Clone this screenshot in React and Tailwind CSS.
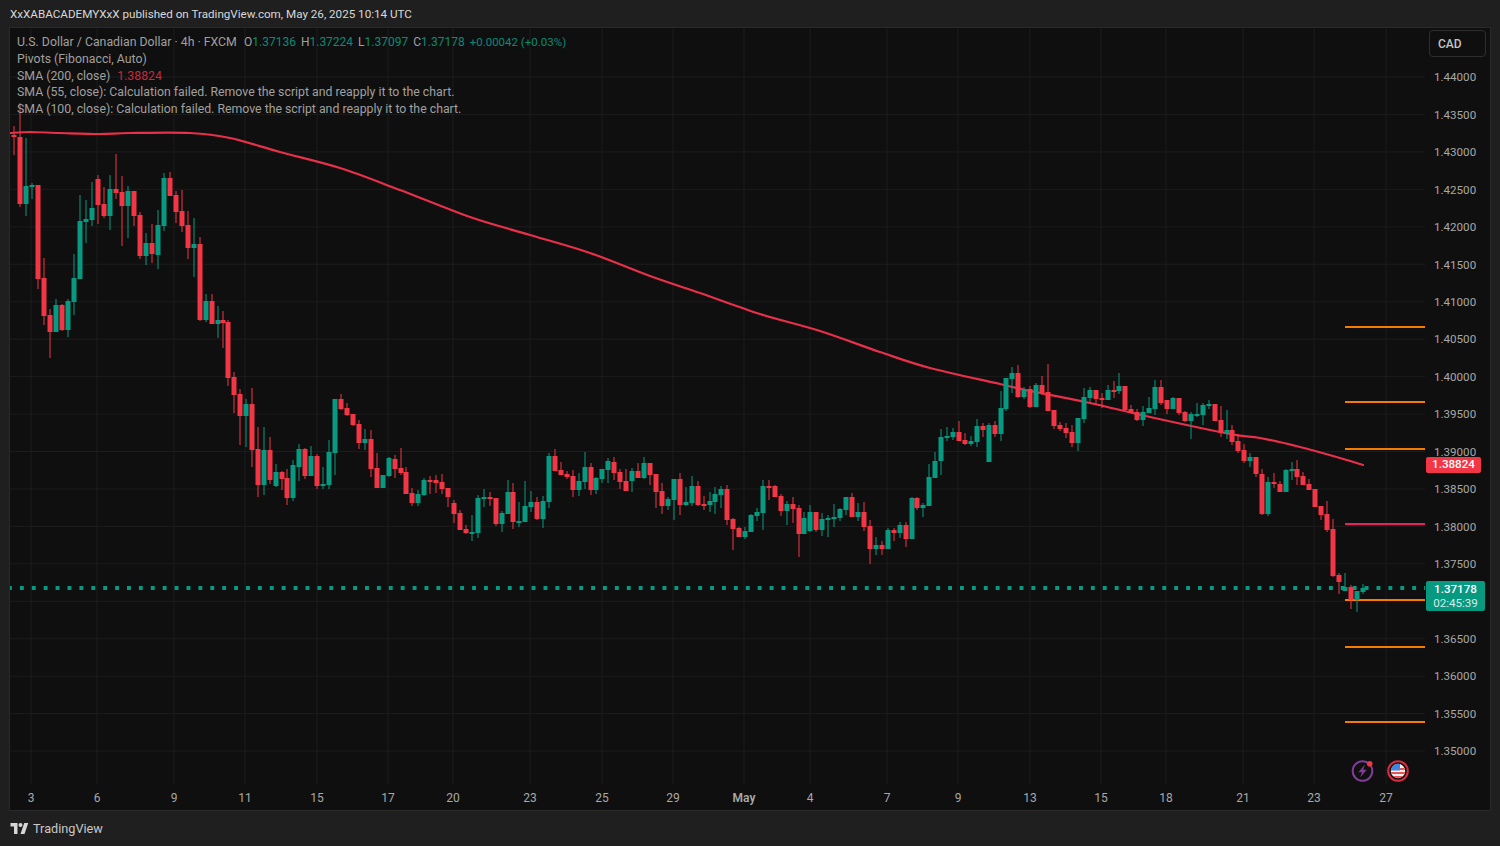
import React from 'react';

const UP = '#089981';
const DOWN = '#f23645';

// x, body top, body bottom, wick top, wick bottom, 1 = up candle
const candles = [
  [14,135,137,126,155,0],[20,137,204,103,207,0],[26,186,204,138,216,1],[32,185,187,183,199,1],[38,185,279,185,289,0],[44,278,316,258,325,0],
  [50,315,332,309,358,0],[56,305,332,299,332,1],[62,305,330,304,331,0],[68,301,330,299,337,1],[74,278,302,254,315,1],[80,221,279,195,279,1],
  [86,219,222,200,243,1],[92,208,220,182,226,1],[98,179,205,175,224,0],[104,204,216,187,218,0],[110,189,216,175,230,1],[116,189,193,154,199,0],
  [122,192,206,176,246,0],[128,191,206,186,238,1],[134,191,216,191,226,0],[140,215,256,212,259,0],[146,243,256,233,265,1],[152,243,254,224,263,0],
  [158,225,255,210,269,1],[164,178,226,173,231,1],[170,178,196,172,196,0],[176,195,212,191,223,0],[182,211,226,190,232,0],[188,225,248,211,259,0],
  [194,244,248,218,277,1],[200,244,320,237,321,0],[206,301,320,294,322,1],[212,301,324,294,324,0],[218,320,324,306,338,1],[223,320,323,311,348,0],
  [228,322,378,320,386,0],[234,377,395,372,413,0],[240,394,416,389,445,0],[246,404,416,399,447,1],[252,404,450,388,467,0],[258,449,485,427,497,0],
  [264,450,485,427,495,1],[270,450,480,437,484,0],[276,472,486,464,487,1],[282,472,479,471,490,0],[287,478,498,469,505,0],[293,465,498,460,501,1],
  [299,449,467,444,481,1],[305,449,476,448,479,0],[311,456,476,446,476,1],[317,456,486,454,489,0],[323,484,486,467,489,1],[329,452,485,440,489,1],
  [335,399,453,399,475,1],[341,399,409,394,410,0],[347,408,415,403,416,0],[353,414,425,414,426,0],[359,424,443,420,449,0],[365,439,443,429,450,1],
  [371,439,469,430,477,0],[377,468,488,453,488,0],[383,475,488,475,488,1],[389,458,476,457,477,1],[395,459,469,455,478,0],[401,468,473,448,475,0],
  [406,472,494,467,494,0],[412,493,503,488,506,0],[418,494,503,490,506,1],[424,480,495,478,496,1],[430,480,482,476,494,0],[436,480,483,475,493,0],
  [442,482,489,474,494,0],[448,488,497,488,507,0],[454,503,514,500,523,0],[460,513,530,510,530,0],[466,529,533,525,534,0],[472,532,534,515,541,1],
  [478,498,533,495,538,1],[484,497,499,489,507,1],[490,497,499,492,506,0],[496,498,524,498,526,0],[502,513,524,511,532,1],[508,492,514,480,514,1],
  [513,492,522,483,529,0],[519,521,523,502,527,1],[525,506,522,481,522,1],[531,502,507,491,512,1],[537,502,519,497,520,0],[543,501,519,496,528,1],
  [549,456,502,453,508,1],[555,456,471,449,471,0],[561,470,475,462,475,0],[567,474,477,471,479,0],[573,476,490,470,497,0],[579,481,490,473,496,1],
  [585,467,482,452,489,1],[591,467,490,463,495,0],[596,478,490,477,494,1],[602,469,479,469,483,1],[608,461,470,458,483,1],[614,462,473,457,480,0],
  [620,472,482,469,489,0],[626,481,491,469,491,0],[632,471,481,468,492,1],[638,471,478,463,478,0],[644,463,478,457,479,1],[650,463,475,463,485,0],
  [656,474,492,474,508,0],[662,491,506,483,514,0],[668,499,506,497,510,1],[674,479,500,479,520,1],[680,479,505,473,515,0],[686,502,505,487,506,1],
  [692,486,503,476,506,1],[698,486,505,481,506,0],[704,504,506,496,510,0],[710,501,505,492,512,1],[715,494,502,487,514,1],[721,489,495,486,508,1],
  [727,489,520,485,525,0],[733,519,529,518,550,0],[739,528,537,527,537,0],[745,531,537,527,539,1],[751,515,532,514,532,1],[757,512,516,508,521,1],
  [763,486,513,480,530,1],[769,486,488,480,500,0],[775,486,497,485,497,0],[781,496,511,494,516,0],[787,504,511,501,525,1],[793,504,509,497,523,0],
  [799,508,534,505,557,0],[804,518,534,512,534,1],[810,512,531,505,532,1],[816,512,530,512,532,0],[822,519,530,513,536,1],[828,518,520,515,537,1],
  [834,517,519,504,527,1],[840,509,518,508,521,1],[846,497,510,497,515,1],[852,497,517,493,517,0],[858,512,517,503,521,1],[864,512,527,502,531,0],
  [870,526,549,520,564,0],[876,545,549,537,555,1],[882,545,549,541,555,0],[888,530,549,528,549,1],[894,530,533,528,541,0],[900,525,533,522,538,1],
  [906,525,539,522,547,0],[912,498,539,497,539,1],[917,498,508,497,510,0],[923,505,508,503,517,1],[929,477,506,464,506,1],[935,461,478,452,478,1],
  [941,437,461,429,475,1],[947,436,438,427,441,1],[953,432,437,428,440,1],[959,432,441,421,441,0],[965,440,444,433,445,0],[971,441,444,436,446,1],
  [977,426,442,419,447,1],[983,426,430,423,437,0],[989,425,462,423,462,1],[995,425,434,421,437,0],[1001,408,434,391,441,1],[1006,378,409,378,411,1],
  [1012,373,379,367,393,1],[1018,373,397,365,398,0],[1024,390,397,387,399,1],[1030,389,407,386,408,0],[1036,385,407,383,407,1],[1042,385,393,376,395,0],
  [1048,392,411,364,411,0],[1054,410,426,410,429,0],[1060,425,429,422,431,0],[1066,428,433,423,438,0],[1072,432,443,425,447,0],[1078,418,443,418,451,1],
  [1084,397,419,388,423,1],[1090,390,398,387,402,1],[1096,390,399,390,405,0],[1102,398,400,393,408,0],[1108,390,400,385,400,1],[1114,390,392,381,398,0],
  [1119,386,391,373,394,1],[1125,386,410,386,410,0],[1131,409,413,405,413,0],[1137,412,420,409,421,0],[1143,412,420,406,426,1],[1149,408,413,397,413,1],
  [1155,387,409,380,415,1],[1161,387,403,380,405,0],[1167,400,409,400,414,0],[1173,398,409,397,409,1],[1179,398,413,398,415,0],[1185,412,421,411,422,0],
  [1191,414,421,412,439,1],[1197,414,416,403,417,1],[1203,405,415,403,425,1],[1209,404,406,400,409,1],[1215,404,421,404,421,0],[1221,420,433,406,437,0],
  [1227,430,433,410,439,1],[1232,430,442,425,445,0],[1238,441,451,434,453,0],[1244,450,461,444,463,0],[1250,457,461,453,467,1],[1256,457,474,457,477,0],
  [1262,474,514,469,515,0],[1268,482,514,477,516,1],[1274,482,484,473,488,0],[1280,484,492,481,492,0],[1286,470,492,469,492,1],[1292,469,471,462,480,1],
  [1297,469,477,460,485,0],[1303,476,485,472,485,0],[1309,484,490,479,490,0],[1315,489,507,489,507,0],[1321,506,515,506,520,0],[1327,514,530,501,532,0],
  [1333,529,576,519,577,0],[1339,575,582,573,594,0],[1345,587,591,573,591,1],[1351,587,600,585,609,0],[1357,591,600,591,612,1],[1363,588,592,584,594,1],
];

const smaPoints = [[10,133],[30,132],[60,133],[100,134],[130,133],[190,133],[230,138],[280,152],[340,168],[400,190],[470,217],[530,235],[590,253],[650,276],[700,293],[760,314],[820,331],[880,352],[930,368],[1000,384],[1030,391],[1090,403],[1150,417],[1230,434],[1260,438],[1300,447],[1340,458],[1363,465]];

// smooth the moving average through its points
const smaPath = () => {
  let d = `M${smaPoints[0][0]} ${smaPoints[0][1]}`;
  for (let i = 0; i < smaPoints.length - 1; i++) {
    const p0 = smaPoints[Math.max(i - 1, 0)];
    const p1 = smaPoints[i];
    const p2 = smaPoints[i + 1];
    const p3 = smaPoints[Math.min(i + 2, smaPoints.length - 1)];
    const c1 = [p1[0] + (p2[0] - p0[0]) / 6, p1[1] + (p2[1] - p0[1]) / 6];
    const c2 = [p2[0] - (p3[0] - p1[0]) / 6, p2[1] - (p3[1] - p1[1]) / 6];
    d += ` C${c1[0]} ${c1[1]} ${c2[0]} ${c2[1]} ${p2[0]} ${p2[1]}`;
  }
  return d;
};

const prices = ['1.44000','1.43500','1.43000','1.42500','1.42000','1.41500','1.41000','1.40500','1.40000','1.39500','1.39000','1.38500','1.38000','1.37500','1.37000','1.36500','1.36000','1.35500','1.35000'];

const timeLabels = [
  [31,'3'],[97,'6'],[174,'9'],[245,'11'],[317,'15'],[388,'17'],[453,'20'],[530,'23'],[602,'25'],[673,'29'],[744,'May'],
  [810,'4'],[887,'7'],[958,'9'],[1030,'13'],[1101,'15'],[1166,'18'],[1243,'21'],[1314,'23'],[1386,'27'],
];

const pivots = [[327,'#f57c00'],[402,'#f57c00'],[449,'#f57c00'],[524,'#e91e63'],[600,'#f57c00'],[647,'#f57c00'],[722,'#f57c00']];

const ChartCanvas = () => (
  <svg className="absolute inset-0 w-full h-full" viewBox="10 28 1415 756">
    {prices.map((p, i) => (
      <line key={p} x1="10" x2="1425" y1={77 + i * 37.45} y2={77 + i * 37.45} stroke="#1c1c1c" strokeWidth="1" />
    ))}
    {timeLabels.map(([x]) => (
      <line key={x} x1={x} x2={x} y1="28" y2="784" stroke="#1c1c1c" strokeWidth="1" />
    ))}
    <line x1="8" x2="1425" y1="588" y2="588" stroke={UP} strokeWidth="4" strokeDasharray="3.9 8" />
    {pivots.map(([y, color]) => (
      <line key={y} x1="1345" x2="1425" y1={y} y2={y} stroke={color} strokeWidth="2" />
    ))}
    <path d={smaPath()} fill="none" stroke="#e9304a" strokeWidth="2.2" strokeLinecap="round" />
    {candles.map(([x, top, bot, wTop, wBot, up]) => (
      <g key={x} fill={up ? UP : DOWN}>
        <rect x={x - 0.5} y={wTop} width="1" height={wBot - wTop} />
        <rect x={x - 2.5} y={top} width="5" height={bot - top} />
      </g>
    ))}
    {/* lightning event marker */}
    <circle cx="1362.5" cy="771" r="9.8" fill="#0f0f0f" stroke="#7d3c98" strokeWidth="2" />
    <path d="M1365 764.5 L1358.3 772.3 H1362 L1360.2 777.5 L1366.8 769.8 H1363.2 Z" fill="#7d3c98" />
    <circle cx="1369.7" cy="763.8" r="2.8" fill="#f23645" />
    {/* US flag marker */}
    <circle cx="1398" cy="771" r="9.8" fill="#0f0f0f" stroke="#d92b3f" strokeWidth="2" />
    <clipPath id="flag"><circle cx="1398" cy="771" r="7.2" /></clipPath>
    <g clipPath="url(#flag)">
      <rect x="1390" y="763" width="16" height="16" fill="#f1f1f1" />
      <rect x="1390" y="768" width="16" height="2" fill="#ef5350" />
      <rect x="1390" y="772" width="16" height="2" fill="#ef5350" />
      <rect x="1390" y="776" width="16" height="3" fill="#ef5350" />
      <rect x="1390" y="763" width="10" height="7.5" fill="#3f86e0" />
    </g>
  </svg>
);

const Logo = () => (
  <svg viewBox="0 0 36 22" className="w-[19px] h-[11px]" fill="#d6d6d6">
    <path d="M14 22H7V7H0V0h14v22zM28 22h-8l7.5-22h8L28 22z" />
    <circle cx="20" cy="4" r="4" />
  </svg>
);

const App = () => {
  return (
    <div className="w-[1500px] h-[846px] bg-[#1f1f1f] flex flex-col overflow-hidden font-['Roboto',sans-serif]">
      <div className="h-[27px] pt-[2px] px-[10px] flex items-center text-[11.65px] text-[#d8d8d8]">
        XxXABACADEMYXxX published on TradingView.com, May 26, 2025 10:14 UTC
      </div>

      <div className="w-[1482px] h-[784px] ml-[9px] bg-[#0f0f0f] border border-[#2a2a2a] flex flex-col">
        <div className="flex h-[756px]">
          <div className="relative w-[1415px]">
            <ChartCanvas />
            <div className="absolute left-[7px] top-[6px] text-[12.3px] leading-[16.8px] text-[#a0a0a0]">
              <div className="flex items-baseline">
                <span className="w-[227px]">U.S. Dollar / Canadian Dollar · 4h · FXCM</span>
                <div className="flex gap-[5px] text-[12px]">
                  <span>O<span className="text-[#0b8a75]">1.37136</span></span>
                  <span>H<span className="text-[#0b8a75]">1.37224</span></span>
                  <span>L<span className="text-[#0b8a75]">1.37097</span></span>
                  <span>C<span className="text-[#0b8a75]">1.37178</span></span>
                  <span className="text-[11.5px] text-[#0b8a75]">+0.00042 (+0.03%)</span>
                </div>
              </div>
              <div>Pivots (Fibonacci, Auto)</div>
              <div className="flex gap-[7px]">
                <span>SMA (200, close)</span>
                <span className="text-[#c9283c]">1.38824</span>
              </div>
              <div>SMA (55, close): Calculation failed. Remove the script and reapply it to the chart.</div>
              <div>SMA (100, close): Calculation failed. Remove the script and reapply it to the chart.</div>
            </div>
          </div>

          <div className="relative flex-1 flex flex-col">
            <div className="ml-[4px] mt-[2px] w-[57px] h-[27px] shrink-0 border border-[#2e2e2e] rounded-[4px] flex items-center pl-[8px] text-[12px] font-medium text-[#c4c4c4]">
              CAD
            </div>
            <div className="mt-[2.3px] flex flex-col">
              {prices.map((p) => (
                <div key={p} className="h-[37.45px] flex items-center pl-[9px] text-[11.6px] text-[#a8a8a8]">
                  {p === '1.37000' ? '' : p}
                </div>
              ))}
            </div>
            <div className="absolute left-[1px] top-[429px] w-[55px] h-[16px] bg-[#f23645] rounded-[2px] flex items-center justify-center text-[11.6px] font-medium text-white">
              1.38824
            </div>
            <div className="absolute left-[1px] top-[553px] w-[59px] h-[30px] bg-[#089981] rounded-[2px] flex flex-col items-center justify-center text-[11.6px] leading-[14px] text-[#d5ece7]">
              <span className="font-medium text-white">1.37178</span>
              <span>02:45:39</span>
            </div>
          </div>
        </div>

        <div className="relative flex-1 text-[12px] text-[#a8a8a8]">
          {timeLabels.map(([x, label]) => (
            <span
              key={x}
              className={label === 'May' ? 'absolute top-[5px] -translate-x-1/2 font-semibold' : 'absolute top-[5px] -translate-x-1/2'}
              style={{ left: x - 10 }}
            >
              {label}
            </span>
          ))}
        </div>
      </div>

      <div className="flex-1 pl-[10px] flex items-center gap-[4px]">
        <Logo />
        <span className="text-[12.7px] text-[#c8c8c8]">TradingView</span>
      </div>
    </div>
  );
};

export default App;
